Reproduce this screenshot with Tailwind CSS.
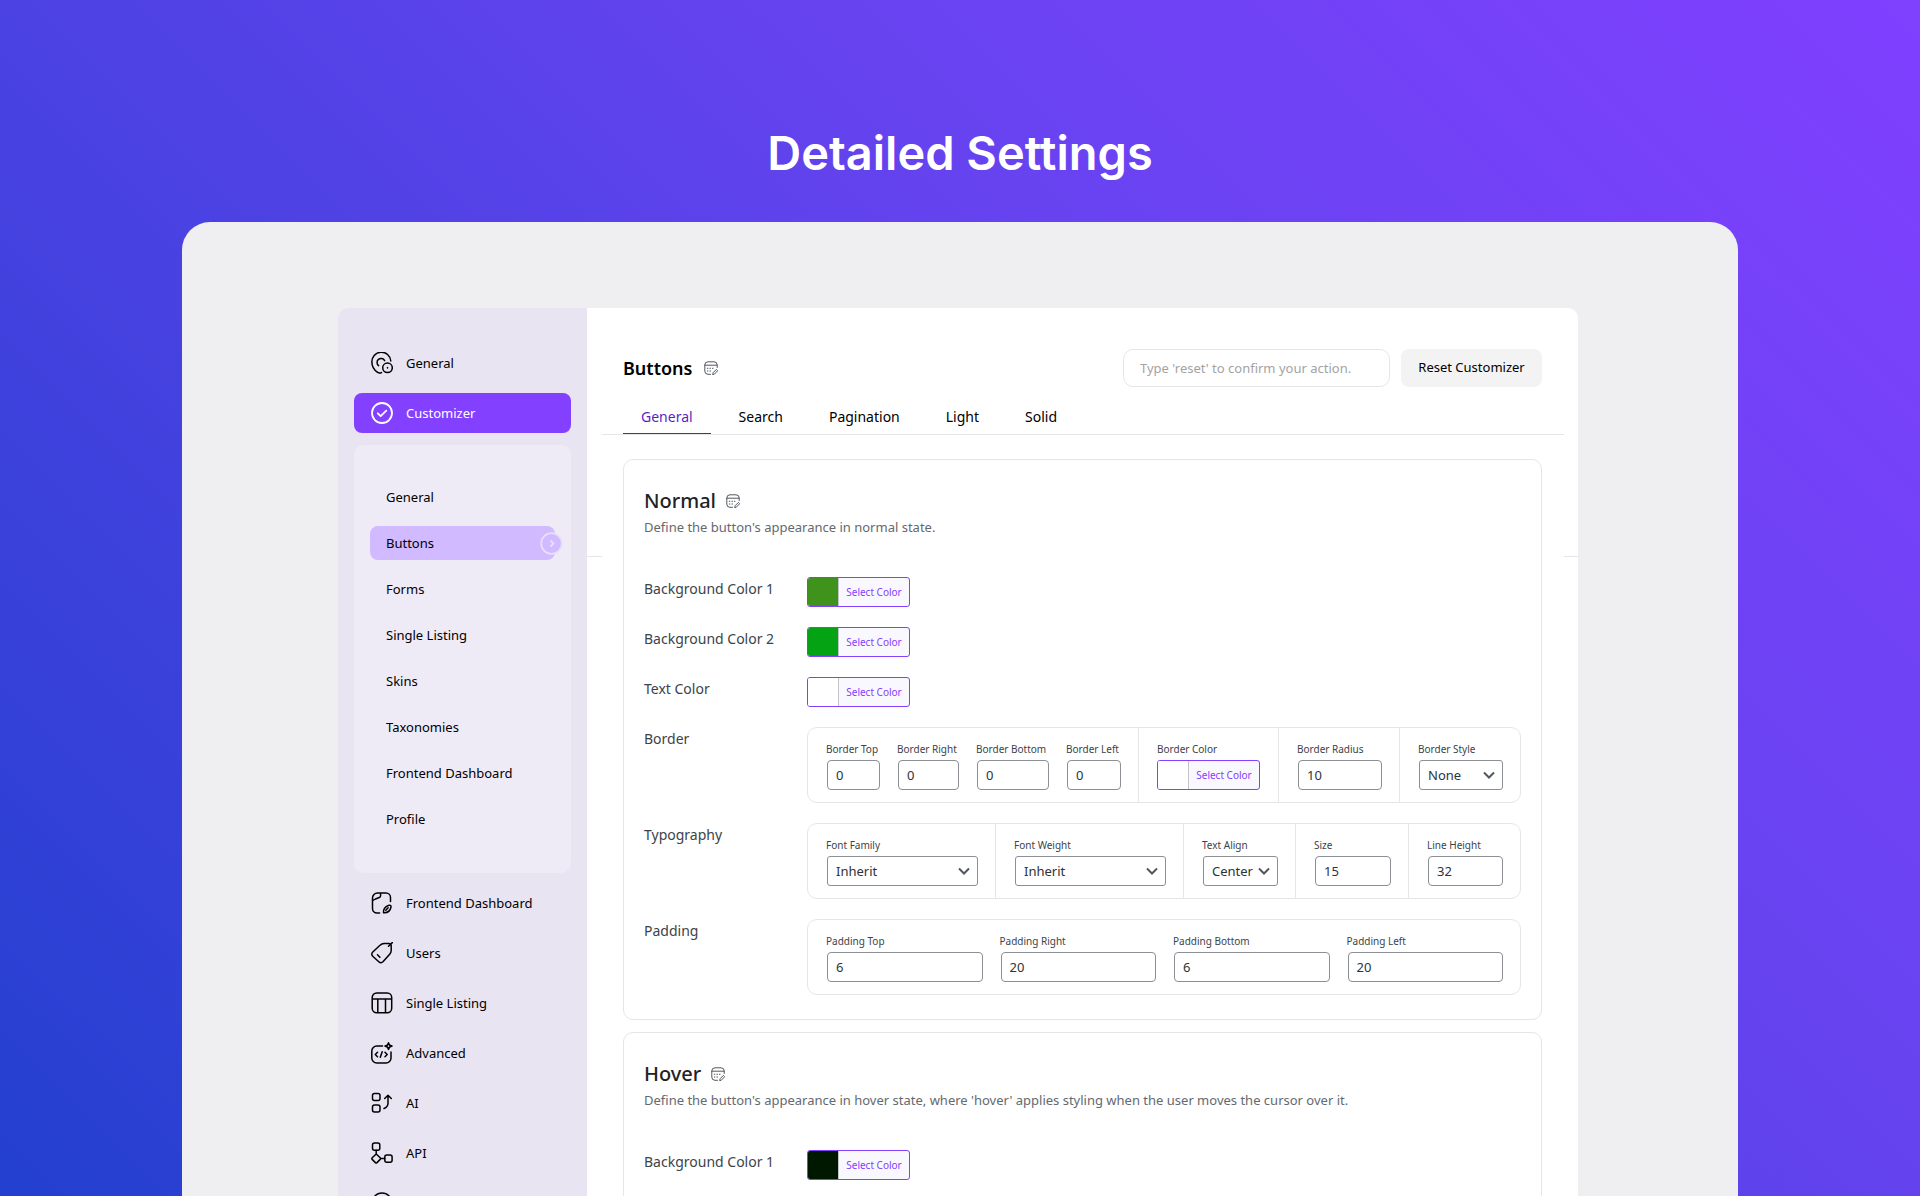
<!DOCTYPE html>
<html lang="en">
<head>
<meta charset="utf-8">
<meta name="viewport" content="width=device-width, initial-scale=1">
<title>Detailed Settings</title>
<script src="https://cdn.jsdelivr.net/npm/@tailwindcss/browser@4"></script>
</head>
<body class="flex h-screen flex-col overflow-hidden bg-linear-[45deg,#2340d0,#6743f0_65%,#8040ff] font-['Noto_Sans',sans-serif] text-[13px] text-black">

<!-- Shared icon symbols -->
<svg class="hidden" aria-hidden="true">
  <symbol id="note" viewBox="0 0 14 14" fill="none" stroke="currentColor" stroke-linecap="round" stroke-linejoin="round">
    <path d="M6.500 13.300H4a3.200 3.200 0 0 1-3.200-3.200V4A3.200 3.200 0 0 1 4 .8h6A3.200 3.200 0 0 1 13.200 4v2.500M.8 4.200h12.400M3.300 7.300h.6M5.900 7.300h.6M8.400 7.300h.6M3.300 10h.6M5.900 10h.6M8.800 13.400l.3-1.700 3.300-3.300 1.300 1.300-3.300 3.400z"/>
  </symbol>
  <symbol id="chevron" viewBox="0 0 12 8" fill="none" stroke="currentColor" stroke-width="2">
    <path d="M1 1.500l5 5 5-5"/>
  </symbol>
</svg>

<header class="flex h-[222px] shrink-0 items-center justify-center pt-[84px]">
  <h1 class="font-['Inter',sans-serif] text-[47px] leading-[60px] font-semibold text-white">Detailed Settings</h1>
</header>

<div class="mx-[182px] flex min-h-0 flex-1 rounded-t-[28px] bg-[#efeff1] pt-[86px] pr-40 pl-39">
  <div class="flex flex-1 overflow-hidden rounded-t-[10px] bg-white">

    <aside class="w-[249px] shrink-0 bg-[#e8e4f2] px-4 pt-[35px]">
      <nav aria-label="Settings" class="flex flex-col gap-2.5">
        <a href="#" class="flex h-10 shrink-0 items-center gap-[13px] rounded-lg pl-[17px]">
          <svg class="size-[22px]" viewBox="0 0 22 22" fill="none" stroke="currentColor" stroke-width="1.5" stroke-linecap="round"><path d="M19.800 9A9.400 9.400 0 1 0 .9 10.300c0 4.600 2.800 8 5.400 9.900 1.400 1 2.900 1 4.200.4M13.600 8.600a4 4 0 1 0-6 5"/><circle cx="16.500" cy="15.800" r="4.800"/><path d="M16.500 15.600v.4"/></svg>
          <span class="pt-px">General</span></a>
        <a href="#" class="flex h-10 shrink-0 items-center gap-[13px] rounded-lg bg-[#8340ff] pl-[17px] text-white">
          <svg class="size-[22px]" viewBox="0 0 22 22" fill="none" stroke="currentColor" stroke-width="1.800" stroke-linecap="round" stroke-linejoin="round"><circle cx="11" cy="11" r="10"/><path d="M6.800 11.300l2.900 2.900 5.600-5.500"/></svg>
          <span class="pt-px">Customizer</span></a>

        <div class="mt-0.5 flex flex-col gap-3 rounded-[10px] bg-[#efebf6] px-4 pt-[35px] pb-[37px]">
          <a href="#" class="flex h-[34px] items-center pt-0.5 pl-4">General</a>
          <a href="#" class="relative flex h-[34px] items-center rounded-lg bg-[#d1baff] pt-0.5 pl-4" aria-current="page">Buttons
            <svg class="absolute top-1.5 -right-2 size-[23px] text-[#e8e0f8]" viewBox="0 0 23 23" fill="#d1baff" stroke="currentColor" stroke-width="1.800"><circle cx="11.500" cy="11.500" r="10.300"/><path fill="none" d="M10.500 8.500l3 3-3 3"/></svg>
          </a>
          <a href="#" class="flex h-[34px] items-center pt-0.5 pl-4">Forms</a>
          <a href="#" class="flex h-[34px] items-center pt-0.5 pl-4">Single Listing</a>
          <a href="#" class="flex h-[34px] items-center pt-0.5 pl-4">Skins</a>
          <a href="#" class="flex h-[34px] items-center pt-0.5 pl-4">Taxonomies</a>
          <a href="#" class="flex h-[34px] items-center pt-0.5 pl-4">Frontend Dashboard</a>
          <a href="#" class="flex h-[34px] items-center pt-0.5 pl-4">Profile</a>
        </div>

        <a href="#" class="flex h-10 shrink-0 items-center gap-[13px] rounded-lg pl-[17px]">
          <svg class="size-[22px]" viewBox="0 0 22 22" fill="none" stroke="currentColor" stroke-width="1.500" stroke-linecap="round" stroke-linejoin="round"><path d="M19.500 9.500V5.500A4.500 4.500 0 0 0 15 1H6.500a5 5 0 0 0-5 5v10.500a4.500 4.500 0 0 0 4.500 4.500h2.600M9.600 1.200v2.300c0 1.200-.4 1.700-1.300 2L4.500 7C3 7.600 1.900 8 1.500 9M12.500 20.700c-.5-3 1.500-6.400 5.600-7.500 1.300-.3 2.200.5 1.900 1.800-.7 3.700-3.500 6-7.500 5.700zM14.800 18.200l2.300-2.500"/></svg>
          <span class="pt-px">Frontend Dashboard</span></a>
        <a href="#" class="flex h-10 shrink-0 items-center gap-[13px] rounded-lg pl-[17px]">
          <svg class="size-[22px]" viewBox="0 0 22 22" fill="none" stroke="currentColor" stroke-width="1.500" stroke-linecap="round" stroke-linejoin="round"><path d="M9 3.200q1.800-1.800 4-1.800h5q2.200 0 2.200 2.200v5q0 1.800-1.300 3.300l-6.700 7.600q-2.200 2.300-4.400.2L2 14.500Q-.4 12.300 1.800 10zM17.500 4.200l3.800-3.600M6.500 12.800l2.400 2.400"/></svg>
          <span class="pt-px">Users</span></a>
        <a href="#" class="flex h-10 shrink-0 items-center gap-[13px] rounded-lg pl-[17px]">
          <svg class="size-[22px]" viewBox="0 0 22 22" fill="none" stroke="currentColor" stroke-width="1.500"><rect x="1.200" y="1" width="19.500" height="19.800" rx="4.500"/><path d="M1.200 7h19.500M6.800 7v13.800M14.500 7v13.800"/></svg>
          <span class="pt-px">Single Listing</span></a>
        <a href="#" class="flex h-10 shrink-0 items-center gap-[13px] rounded-lg pl-[17px]">
          <svg class="size-[22px]" viewBox="0 0 22 22" fill="none" stroke="currentColor" stroke-width="1.500" stroke-linecap="round" stroke-linejoin="round"><path d="M11.500 4H5.800a5 5 0 0 0-5 5v7a5 5 0 0 0 5 5H15a5 5 0 0 0 5-5v-6M6.500 10.300l-2.200 2.200 2.200 2.200M14 10.300l2.200 2.200-2.200 2.200M11.200 9.800l-1.900 5.400M17.500.8q.4 2.800 3.500 3.300-3.100.5-3.500 3.400-.4-2.900-3.500-3.400 3.100-.5 3.500-3.300z"/></svg>
          <span class="pt-px">Advanced</span></a>
        <a href="#" class="flex h-10 shrink-0 items-center gap-[13px] rounded-lg pl-[17px]">
          <svg class="size-[22px]" viewBox="0 0 22 22" fill="none" stroke="currentColor" stroke-width="1.500" stroke-linecap="round" stroke-linejoin="round"><rect x="1.500" y="1.500" width="7.500" height="7" rx="2"/><rect x="1.500" y="13" width="7.500" height="7" rx="2"/><path d="M13 16.500c2.800-1 4-2.800 4-5.500V3.800M13.700 6.500L17 3.200l3.300 3.300"/></svg>
          <span class="pt-px">AI</span></a>
        <a href="#" class="flex h-10 shrink-0 items-center gap-[13px] rounded-lg pl-[17px]">
          <svg class="size-[22px]" viewBox="0 0 22 22" fill="none" stroke="currentColor" stroke-width="1.500" stroke-linecap="round" stroke-linejoin="round"><rect x="1.500" y="1" width="7.300" height="7.300" rx="2"/><rect x="13.800" y="13" width="7.300" height="7.300" rx="2"/><path d="M5.200 8.300V12M9.800 16.600h4M5.200 12l4 3.800q.8.800 0 1.600l-3.200 3.200q-.8.700-1.600 0L1.200 17.400q-.8-.8 0-1.600z"/></svg>
          <span class="pt-px">API</span></a>
        <a href="#" aria-label="Help" class="flex h-10 shrink-0 items-center gap-[13px] rounded-lg pl-[17px]">
          <svg class="size-[22px]" viewBox="0 0 22 22" fill="none" stroke="currentColor" stroke-width="1.500"><circle cx="11" cy="11" r="10"/></svg>
        </a>
      </nav>
    </aside>

    <main class="relative min-w-0 flex-1 pr-3.5 pl-[15px]">
      <div class="absolute inset-x-0 top-[248px] h-px bg-[#e6e6e8]"></div>
      <div class="relative bg-white pt-[41px]">
        <div class="flex items-center justify-between pr-[22px] pl-[21px]">
          <h2 class="flex items-center gap-3 text-lg leading-6 font-semibold">Buttons <svg class="size-3.5 text-[#50575e]" aria-hidden="true"><use href="#note"/></svg></h2>
          <form class="flex gap-[11px]">
            <input type="text" aria-label="Type 'reset' to confirm your action." placeholder="Type 'reset' to confirm your action." class="h-[38px] w-[267px] rounded-[10px] border border-[#e6e6e8] px-4 placeholder:text-[#a3a3a3]">
            <button type="button" class="h-[38px] w-[141px] rounded-lg bg-[#f3f3f3]">Reset Customizer</button>
          </form>
        </div>

        <nav aria-label="Button settings" class="mt-[13px] flex gap-2.5 border-b border-[#e6e6e8] pl-[21px] text-sm">
          <a href="#" aria-current="page" class="flex h-[34px] items-center border-b border-[#5a1fc4] px-[18px] text-[#5a1fc4]">General</a>
          <a href="#" class="flex h-[34px] items-center px-[18px]">Search</a>
          <a href="#" class="flex h-[34px] items-center px-[18px]">Pagination</a>
          <a href="#" class="flex h-[34px] items-center px-[18px]">Light</a>
          <a href="#" class="flex h-[34px] items-center px-[18px]">Solid</a>
        </nav>

        <div class="mt-6 mr-[22px] ml-[21px] flex flex-col gap-3 text-[#3c434a]">
          <section class="rounded-[10px] border border-[#e6e6e8] px-5 pt-[27px] pb-6">
            <h3 class="flex h-7 items-center gap-2.5 text-xl font-medium text-[#1d2327]">Normal <svg class="size-3.5 text-[#50575e]" aria-hidden="true"><use href="#note"/></svg></h3>
            <p class="mt-0.5 leading-5 text-[#646970]">Define the button's appearance in normal state.</p>

            <div class="mt-10 flex flex-col gap-5">
              <div class="flex">
                <span id="n-bg1" class="w-[163px] shrink-0 text-sm leading-6">Background Color 1</span>
                <button type="button" aria-describedby="n-bg1" class="flex h-[30px] w-[103px] overflow-hidden rounded-[3px] border border-[#8340ff] bg-[#faf8ff] text-[10px] text-[#8340ff]"><span class="h-full w-[31px] border-r border-[#c3c4c7] bg-[#3f931d]"></span><span class="flex-1 self-center">Select Color</span></button>
              </div>
              <div class="flex">
                <span id="n-bg2" class="w-[163px] shrink-0 text-sm leading-6">Background Color 2</span>
                <button type="button" aria-describedby="n-bg2" class="flex h-[30px] w-[103px] overflow-hidden rounded-[3px] border border-[#8340ff] bg-[#faf8ff] text-[10px] text-[#8340ff]"><span class="h-full w-[31px] border-r border-[#c3c4c7] bg-[#03a314]"></span><span class="flex-1 self-center">Select Color</span></button>
              </div>
              <div class="flex">
                <span id="n-txt" class="w-[163px] shrink-0 text-sm leading-6">Text Color</span>
                <button type="button" aria-describedby="n-txt" class="flex h-[30px] w-[103px] overflow-hidden rounded-[3px] border border-[#8340ff] bg-[#faf8ff] text-[10px] text-[#8340ff]"><span class="h-full w-[31px] border-r border-[#c3c4c7] bg-white"></span><span class="flex-1 self-center">Select Color</span></button>
              </div>

              <div class="flex">
                <span class="w-[163px] shrink-0 text-sm leading-6">Border</span>
                <div class="grid h-[76px] flex-1 grid-cols-[331fr_140fr_121fr_120fr] divide-x divide-[#e6e6e8] rounded-[10px] border border-[#e6e6e8] text-[10px] leading-4">
                  <div class="flex min-w-0 gap-4 pt-[13px] pr-4 pl-[18px]">
                    <label class="flex min-w-0 flex-[55] flex-col gap-[3px] whitespace-nowrap">Border Top <input type="text" value="0" class="mx-px h-[30px] min-w-0 rounded border border-[#8c8f94] px-2 text-[13px] text-[#2c3338]"></label>
                    <label class="flex min-w-0 flex-[63] flex-col gap-[3px] whitespace-nowrap">Border Right <input type="text" value="0" class="mx-px h-[30px] min-w-0 rounded border border-[#8c8f94] px-2 text-[13px] text-[#2c3338]"></label>
                    <label class="flex min-w-0 flex-[74] flex-col gap-[3px] whitespace-nowrap">Border Bottom <input type="text" value="0" class="mx-px h-[30px] min-w-0 rounded border border-[#8c8f94] px-2 text-[13px] text-[#2c3338]"></label>
                    <label class="flex min-w-0 flex-[56] flex-col gap-[3px] whitespace-nowrap">Border Left <input type="text" value="0" class="mx-px h-[30px] min-w-0 rounded border border-[#8c8f94] px-2 text-[13px] text-[#2c3338]"></label>
                  </div>
                  <div class="flex min-w-0 flex-col gap-[3px] pt-[13px] pl-[18px]">
                    <span id="n-bc">Border Color</span>
                    <button type="button" aria-describedby="n-bc" class="flex h-[30px] w-[103px] overflow-hidden rounded-[3px] border border-[#8340ff] bg-[#faf8ff] text-[#8340ff]"><span class="h-full w-[31px] border-r border-[#c3c4c7] bg-white"></span><span class="flex-1 self-center">Select Color</span></button>
                  </div>
                  <label class="flex min-w-0 flex-col gap-[3px] pt-[13px] pr-4 pl-[18px]">Border Radius <input type="text" value="10" class="mx-px h-[30px] min-w-0 rounded border border-[#8c8f94] px-2 text-[13px] text-[#2c3338]"></label>
                  <label class="flex min-w-0 flex-col gap-[3px] pt-[13px] pr-4 pl-[18px]">Border Style <span class="relative mx-px flex"><select class="h-[30px] w-full appearance-none rounded-[3px] border border-[#8c8f94] bg-white pr-6 pl-2 text-[13px] text-[#2c3338]"><option>None</option></select><svg class="pointer-events-none absolute top-[11px] right-2 h-2 w-3 text-[#50575e]"><use href="#chevron"/></svg></span></label>
                </div>
              </div>

              <div class="flex">
                <span class="w-[163px] shrink-0 text-sm leading-6">Typography</span>
                <div class="grid h-[76px] flex-1 grid-cols-[188fr_188fr_112fr_113fr_111fr] divide-x divide-[#e6e6e8] rounded-[10px] border border-[#e6e6e8] text-[10px] leading-4">
                  <label class="flex min-w-0 flex-col gap-[3px] pt-[13px] pr-4 pl-[18px]">Font Family <span class="relative mx-px flex"><select class="h-[30px] w-full appearance-none rounded-[3px] border border-[#8c8f94] bg-white pr-6 pl-2 text-[13px] text-[#2c3338]"><option>Inherit</option></select><svg class="pointer-events-none absolute top-[11px] right-2 h-2 w-3 text-[#50575e]"><use href="#chevron"/></svg></span></label>
                  <label class="flex min-w-0 flex-col gap-[3px] pt-[13px] pr-4 pl-[18px]">Font Weight <span class="relative mx-px flex"><select class="h-[30px] w-full appearance-none rounded-[3px] border border-[#8c8f94] bg-white pr-6 pl-2 text-[13px] text-[#2c3338]"><option>Inherit</option></select><svg class="pointer-events-none absolute top-[11px] right-2 h-2 w-3 text-[#50575e]"><use href="#chevron"/></svg></span></label>
                  <label class="flex min-w-0 flex-col gap-[3px] pt-[13px] pr-4 pl-[18px]">Text Align <span class="relative mx-px flex"><select class="h-[30px] w-full appearance-none rounded-[3px] border border-[#8c8f94] bg-white pr-6 pl-2 text-[13px] text-[#2c3338]"><option>Center</option></select><svg class="pointer-events-none absolute top-[11px] right-2 h-2 w-3 text-[#50575e]"><use href="#chevron"/></svg></span></label>
                  <label class="flex min-w-0 flex-col gap-[3px] pt-[13px] pr-4 pl-[18px]">Size <input type="text" value="15" class="mx-px h-[30px] min-w-0 rounded border border-[#8c8f94] px-2 text-[13px] text-[#2c3338]"></label>
                  <label class="flex min-w-0 flex-col gap-[3px] pt-[13px] pr-4 pl-[18px]">Line Height <input type="text" value="32" class="mx-px h-[30px] min-w-0 rounded border border-[#8c8f94] px-2 text-[13px] text-[#2c3338]"></label>
                </div>
              </div>

              <div class="flex">
                <span class="w-[163px] shrink-0 text-sm leading-6">Padding</span>
                <div class="grid h-[76px] flex-1 grid-cols-4 gap-4 rounded-[10px] border border-[#e6e6e8] pt-[13px] pr-4 pl-[18px] text-[10px] leading-4">
                  <label class="flex min-w-0 flex-col gap-[3px]">Padding Top <input type="text" value="6" class="mx-px h-[30px] min-w-0 rounded border border-[#8c8f94] px-2 text-[13px] text-[#2c3338]"></label>
                  <label class="flex min-w-0 flex-col gap-[3px]">Padding Right <input type="text" value="20" class="mx-px h-[30px] min-w-0 rounded border border-[#8c8f94] px-2 text-[13px] text-[#2c3338]"></label>
                  <label class="flex min-w-0 flex-col gap-[3px]">Padding Bottom <input type="text" value="6" class="mx-px h-[30px] min-w-0 rounded border border-[#8c8f94] px-2 text-[13px] text-[#2c3338]"></label>
                  <label class="flex min-w-0 flex-col gap-[3px]">Padding Left <input type="text" value="20" class="mx-px h-[30px] min-w-0 rounded border border-[#8c8f94] px-2 text-[13px] text-[#2c3338]"></label>
                </div>
              </div>
            </div>
          </section>

          <section class="rounded-[10px] border border-[#e6e6e8] px-5 pt-[27px] pb-6">
            <h3 class="flex h-7 items-center gap-2.5 text-xl font-medium text-[#1d2327]">Hover <svg class="size-3.5 text-[#50575e]" aria-hidden="true"><use href="#note"/></svg></h3>
            <p class="mt-0.5 leading-5 text-[#646970]">Define the button's appearance in hover state, where 'hover' applies styling when the user moves the cursor over it.</p>
            <div class="mt-10 flex flex-col gap-5">
              <div class="flex">
                <span id="h-bg1" class="w-[163px] shrink-0 text-sm leading-6">Background Color 1</span>
                <button type="button" aria-describedby="h-bg1" class="flex h-[30px] w-[103px] overflow-hidden rounded-[3px] border border-[#8340ff] bg-[#faf8ff] text-[10px] text-[#8340ff]"><span class="h-full w-[31px] border-r border-[#c3c4c7] bg-[#001700]"></span><span class="flex-1 self-center">Select Color</span></button>
              </div>
            </div>
          </section>
        </div>
      </div>
    </main>
  </div>
</div>
</body>
</html>
